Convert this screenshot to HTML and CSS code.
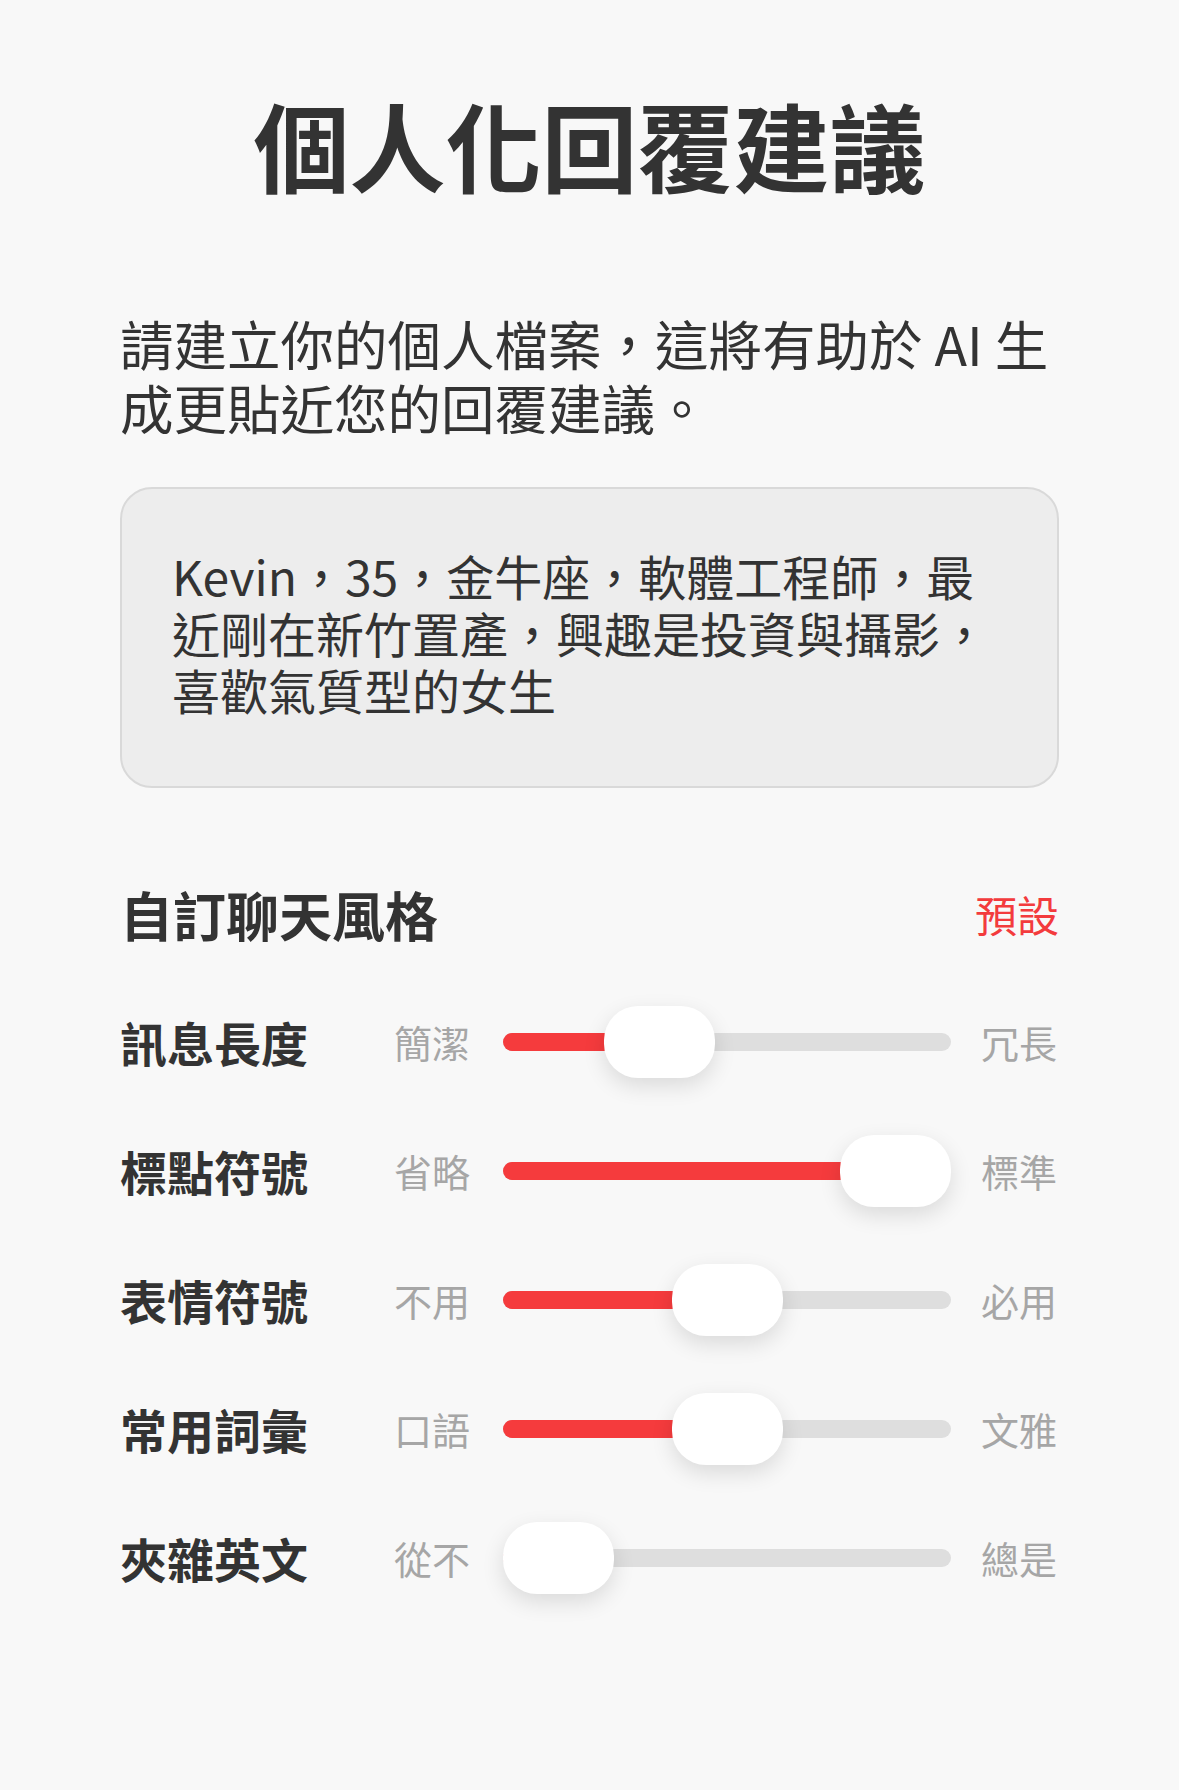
FILE: index.html
```html
<!DOCTYPE html>
<html lang="zh-Hant">
<head>
    <meta charset="UTF-8">
    <meta name="viewport" content="width=device-width, initial-scale=1.0">
    <title>個人化回覆建議</title>
    <link rel="stylesheet" href="styles.css">
</head>
<body>
    <main class="page">
        <h1 class="title">個人化回覆建議</h1>

        <p class="intro">請建立你的個人檔案，這將有助於 AI 生成更貼近您的回覆建議。</p>

        <div class="profile-box">Kevin，35，金牛座，軟體工程師，最近剛在新竹置產，興趣是投資與攝影，喜歡氣質型的女生</div>

        <div class="section-head">
            <h2>自訂聊天風格</h2>
            <button class="reset-btn">預設</button>
        </div>

        <div class="style-list">
            <div class="style-row">
                <span class="style-name">訊息長度</span>
                <span class="style-low">簡潔</span>
                <div class="slider" style="--v: 0.3">
                    <div class="slider-fill"></div>
                    <div class="slider-thumb"></div>
                </div>
                <span class="style-high">冗長</span>
            </div>
            <div class="style-row">
                <span class="style-name">標點符號</span>
                <span class="style-low">省略</span>
                <div class="slider" style="--v: 1">
                    <div class="slider-fill"></div>
                    <div class="slider-thumb"></div>
                </div>
                <span class="style-high">標準</span>
            </div>
            <div class="style-row">
                <span class="style-name">表情符號</span>
                <span class="style-low">不用</span>
                <div class="slider" style="--v: 0.5">
                    <div class="slider-fill"></div>
                    <div class="slider-thumb"></div>
                </div>
                <span class="style-high">必用</span>
            </div>
            <div class="style-row">
                <span class="style-name">常用詞彙</span>
                <span class="style-low">口語</span>
                <div class="slider" style="--v: 0.5">
                    <div class="slider-fill"></div>
                    <div class="slider-thumb"></div>
                </div>
                <span class="style-high">文雅</span>
            </div>
            <div class="style-row">
                <span class="style-name">夾雜英文</span>
                <span class="style-low">從不</span>
                <div class="slider" style="--v: 0">
                    <div class="slider-fill"></div>
                    <div class="slider-thumb"></div>
                </div>
                <span class="style-high">總是</span>
            </div>
        </div>
    </main>
</body>
</html>
```

FILE: styles.css
```css
html, body {
    margin: 0;
    padding: 0;
    background: #f8f8f8;
}
body {
    font-family: "Noto Sans CJK TC", "Noto Sans", sans-serif;
    color: #333;
}
.page {
    padding: 86px 120px 160px;
}
.title {
    margin: 0;
    font-size: 96px;
    line-height: 115px;
    font-weight: 700;
    text-align: center;
    color: #333;
}
.intro {
    margin: 110px 0 0;
    font-size: 53.5px;
    line-height: 64px;
    color: #333;
}
.profile-box {
    margin-top: 48px;
    height: 179px;
    padding: 58px 50px 60px;
    background: #ededed;
    border: 2px solid #d9d9d9;
    border-radius: 32px;
    font-size: 48px;
    line-height: 57px;
    color: #333;
}
.section-head {
    margin-top: 96px;
    display: flex;
    align-items: center;
    justify-content: space-between;
    height: 60px;
}
.section-head h2 {
    margin: 0;
    font-size: 53px;
    font-weight: 700;
    line-height: 60px;
}
.reset-btn {
    border: none;
    background: none;
    padding: 0;
    font-family: inherit;
    font-size: 42px;
    line-height: 60px;
    color: #f33b3d;
    cursor: pointer;
}
.style-list {
    margin-top: 33px;
}
.style-row {
    display: grid;
    grid-template-columns: 274px 109px 1fr 108px;
    align-items: center;
    height: 129px;
}
.style-name {
    font-size: 47px;
    font-weight: 700;
    color: #333;
}
.style-low,
.style-high {
    font-size: 38px;
    color: #a6a6a6;
}
.style-high {
    text-align: right;
    padding-right: 2px;
}
.slider {
    position: relative;
    height: 18px;
    border-radius: 9px;
    background: #dedede;
}
.slider-fill {
    height: 100%;
    width: calc(var(--v) * (100% - 111px) + 20px);
    border-radius: 9px;
    background: #f53b3d;
}
.slider-thumb {
    position: absolute;
    top: -27px;
    left: calc(var(--v) * (100% - 111px));
    width: 111px;
    height: 72px;
    border-radius: 34px;
    background: #fff;
    box-shadow: 0 8px 22px rgba(0, 0, 0, 0.12);
}
```
